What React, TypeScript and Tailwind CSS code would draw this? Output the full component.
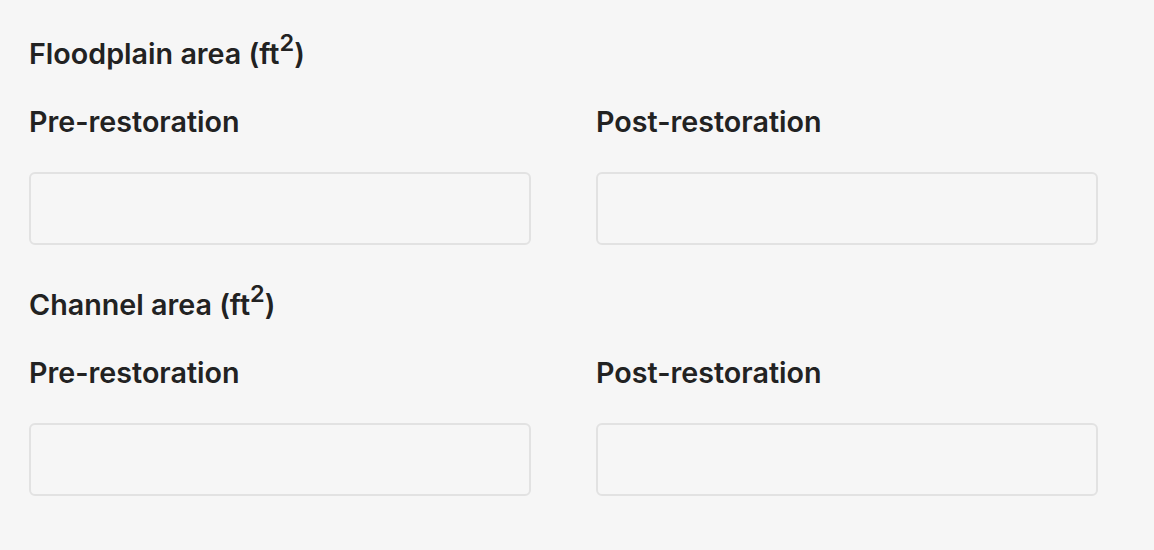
export default function App() {
  const sections = [
    { title: 'Floodplain area', id: 'floodplain' },
    { title: 'Channel area', id: 'channel' },
  ]

  return (
    <div className="min-h-[550px] w-full bg-[#f6f6f6] text-[#222222] font-['Inter','Liberation_Sans',sans-serif]">
      <div className="pl-[29px] pt-[37px] flex flex-col gap-[43px]">
        {sections.map((section) => (
          <div key={section.id}>
            <h2 className="text-[28.7px] leading-[34px] font-semibold mb-[34px]">
              {section.title} (ft<sup className="text-[0.82em] -top-[0.55em]">2</sup>)
            </h2>
            <div className="flex gap-[65px]">
              <div className="w-[502px]">
                <label className="block text-[28.7px] leading-[34px] font-semibold mb-[33px]">
                  Pre-restoration
                </label>
                <input
                  type="text"
                  className="block w-full h-[73px] rounded-[6px] border-2 border-[#e2e2e2] bg-[#f6f6f6] outline-none"
                />
              </div>
              <div className="w-[502px]">
                <label className="block text-[28.7px] leading-[34px] font-semibold mb-[33px]">
                  Post-restoration
                </label>
                <input
                  type="text"
                  className="block w-full h-[73px] rounded-[6px] border-2 border-[#e2e2e2] bg-[#f6f6f6] outline-none"
                />
              </div>
            </div>
          </div>
        ))}
      </div>
    </div>
  )
}
